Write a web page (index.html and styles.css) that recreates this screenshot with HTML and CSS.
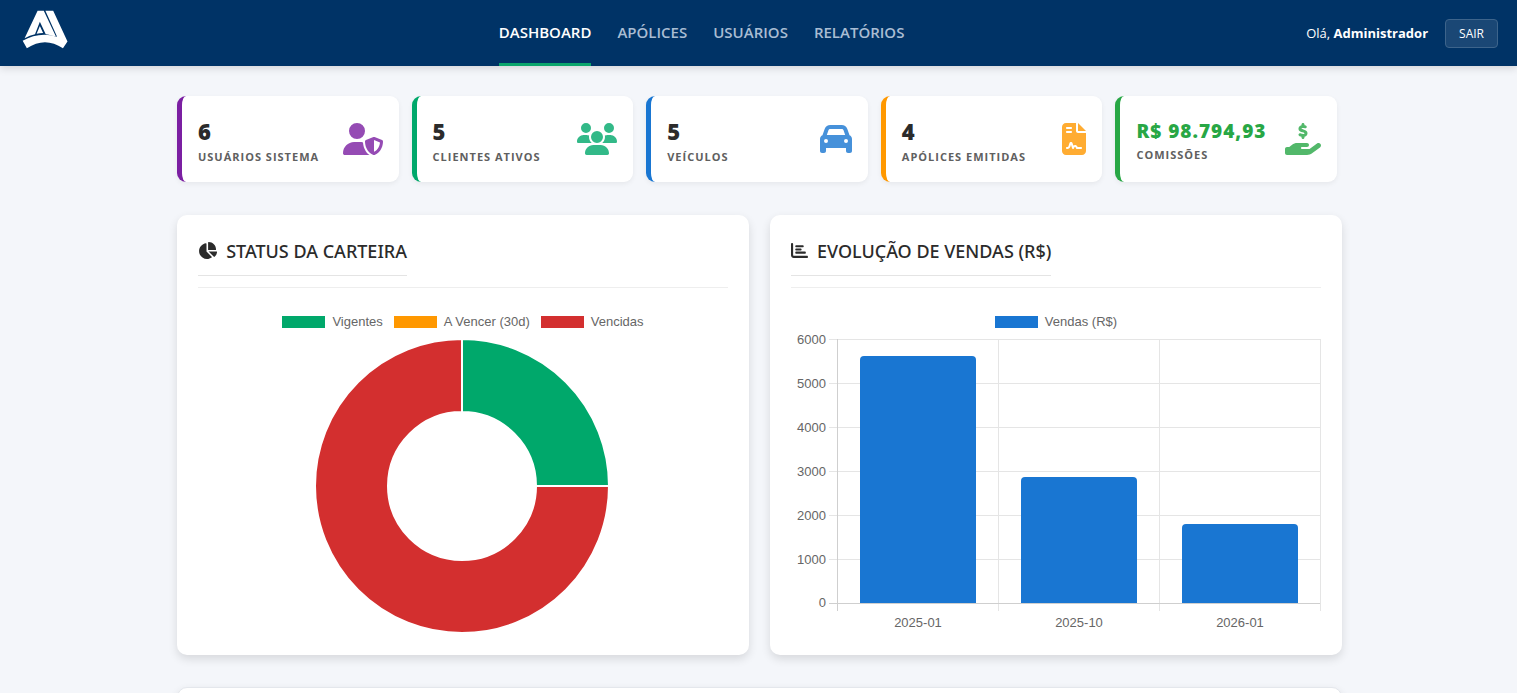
FILE: index.html
```html
<!DOCTYPE html>
<html lang="pt-BR">

<head>
    <meta charset="UTF-8">
    <meta name="viewport" content="width=device-width, initial-scale=1.0">
    <title>Dashboard</title>
    <link rel="stylesheet" href="styles.css">
</head>

<body>
    <div class="page">
        <header class="navbar">
            <a href="#" class="logo" aria-label="Início">
                <svg viewBox="64 28 142 120">
                    <path d="M112 30H131L168 109L156 107Q147 104 137 103L119 64L104 103Q88 106 72 115Z" />
                    <path d="M119 77L129 99Q119 99 109 101Z" />
                    <path d="M136 30H160L204 125L190 146Q135 109 79 146L66 123Q115 94 172 110Z" />
                </svg>
            </a>
            <nav class="menu">
                <a href="#" class="active">DASHBOARD</a>
                <a href="#">APÓLICES</a>
                <a href="#">USUÁRIOS</a>
                <a href="#">RELATÓRIOS</a>
            </nav>
            <div class="user-area">
                <span>Olá, <strong>Administrador</strong></span>
                <button type="button" class="btn-sair">SAIR</button>
            </div>
        </header>

        <main class="container">
            <!-- Cards de resumo -->
            <section class="stats">
                <div class="stat-card roxo">
                    <div class="info">
                        <h3>6</h3>
                        <p>USUÁRIOS SISTEMA</p>
                    </div>
                    <svg class="icon" viewBox="0 0 640 512"><path d="M224 256A128 128 0 1 0 224 0a128 128 0 1 0 0 256zm-45.7 48C79.8 304 0 383.8 0 482.3C0 498.7 13.3 512 29.7 512H418.3c1.8 0 3.5-.2 5.3-.5c-76.3-55.1-99.8-141-103.1-200.2c-16.1-4.8-33.1-7.3-50.7-7.3H178.3zm308.8-78.3l-120 48C358 277.4 352 286.2 352 296c0 63.3 25.9 168.8 134.8 214.2c5.9 2.5 12.6 2.5 18.5 0C614.1 464.8 640 359.3 640 296c0-9.8-6-18.6-15.1-22.3l-120-48c-5.7-2.3-12.1-2.3-17.8 0zM591.4 312c-3.9 50.7-27.2 116.7-95.4 149.7V273.8L591.4 312z" /></svg>
                </div>
                <div class="stat-card verde">
                    <div class="info">
                        <h3>5</h3>
                        <p>CLIENTES ATIVOS</p>
                    </div>
                    <svg class="icon" viewBox="0 0 640 512"><path d="M144 0a80 80 0 1 1 0 160A80 80 0 1 1 144 0zM512 0a80 80 0 1 1 0 160A80 80 0 1 1 512 0zM0 298.7C0 239.8 47.8 192 106.7 192h42.7c15.9 0 31 3.5 44.6 9.7c-1.3 7.2-1.9 14.7-1.9 22.3c0 38.2 16.8 72.5 43.3 96c-.2 0-.4 0-.7 0H21.3C9.6 320 0 310.4 0 298.7zM405.3 320c-.2 0-.4 0-.7 0c26.6-23.5 43.3-57.8 43.3-96c0-7.6-.7-15-1.9-22.3c13.6-6.3 28.7-9.7 44.6-9.7h42.7C592.2 192 640 239.8 640 298.7c0 11.8-9.6 21.3-21.3 21.3H405.3zM224 224a96 96 0 1 1 192 0 96 96 0 1 1 -192 0zM128 485.3C128 411.7 187.7 352 261.3 352H378.7C452.3 352 512 411.7 512 485.3c0 14.7-11.9 26.7-26.7 26.7H154.7c-14.7 0-26.7-11.9-26.7-26.7z" /></svg>
                </div>
                <div class="stat-card azul">
                    <div class="info">
                        <h3>5</h3>
                        <p>VEÍCULOS</p>
                    </div>
                    <svg class="icon" viewBox="0 0 512 512"><path d="M135.2 117.4L109.1 192H402.9l-26.1-74.6C372.3 104.6 360.2 96 346.6 96H165.4c-13.6 0-25.7 8.6-30.2 21.4zM39.6 196.8L74.8 96.3C88.3 57.8 124.6 32 165.4 32H346.6c40.8 0 77.1 25.8 90.6 64.3l35.2 100.5c23.2 9.6 39.6 32.5 39.6 59.2V400v48c0 17.7-14.3 32-32 32H448c-17.7 0-32-14.3-32-32V400H96v48c0 17.7-14.3 32-32 32H32c-17.7 0-32-14.3-32-32V400 256c0-26.7 16.4-49.6 39.6-59.2zM128 288a32 32 0 1 0 -64 0 32 32 0 1 0 64 0zm288 32a32 32 0 1 0 0-64 32 32 0 1 0 0 64z" /></svg>
                </div>
                <div class="stat-card laranja">
                    <div class="info">
                        <h3>4</h3>
                        <p>APÓLICES EMITIDAS</p>
                    </div>
                    <svg class="icon" viewBox="0 0 384 512"><path d="M64 0C28.7 0 0 28.7 0 64V448c0 35.3 28.7 64 64 64H320c35.3 0 64-28.7 64-64V160H256c-17.7 0-32-14.3-32-32V0H64zM256 0V128H384L256 0zM80 64h64c8.8 0 16 7.2 16 16s-7.2 16-16 16H80c-8.8 0-16-7.2-16-16s7.2-16 16-16zm0 64h64c8.8 0 16 7.2 16 16s-7.2 16-16 16H80c-8.8 0-16-7.2-16-16s7.2-16 16-16zm54.2 253.8c-6.1 20.3-24.8 34.2-46 34.2H80c-8.8 0-16-7.2-16-16s7.2-16 16-16h8.2c7.1 0 13.3-4.6 15.3-11.4l14.9-49.5c3.4-11.3 13.8-19.1 25.6-19.1s22.2 7.7 25.6 19.1l11.6 38.6c7.4-6.2 16.8-9.7 26.8-9.7c15.9 0 30.4 9 37.5 23.2l4.4 8.8H304c8.8 0 16 7.2 16 16s-7.2 16-16 16H240c-6.1 0-11.6-3.4-14.3-8.8l-8.8-17.7c-1.7-3.4-5.1-5.5-8.8-5.5s-7.2 2.1-8.8 5.5l-8.8 17.7c-2.9 5.9-9.2 9.4-15.7 8.8s-12.1-5.1-13.9-11.3L144 349l-9.8 32.8z" /></svg>
                </div>
                <div class="stat-card dinheiro">
                    <div class="info">
                        <h3 class="valor">R$ 98.794,93</h3>
                        <p>COMISSÕES</p>
                    </div>
                    <svg class="icon" viewBox="0 0 576 512"><path d="M312 24V34.5c6.4 1.2 12.6 2.7 18.2 4.2c12.8 3.4 20.4 16.6 17 29.4s-16.6 20.4-29.4 17c-10.9-2.9-21.1-4.9-30.2-5c-7.3-.1-14.7 1.7-19.4 4.4c-2.1 1.3-3.1 2.4-3.5 3c-.3 .5-.7 1.2-.7 2.8c0 .3 0 .5 0 .6c.2 .2 .9 1.2 3.3 2.6c5.8 3.5 14.4 6.2 27.4 10.1l.9 .3c11.1 3.3 25.9 7.8 37.9 15.3c13.7 8.6 26.1 22.9 26.4 44.9c.3 22.5-11.4 38.9-26.7 48.5c-6.7 4.1-13.9 7-21.3 8.8V232c0 13.3-10.7 24-24 24s-24-10.7-24-24V220.6c-9.5-2.3-18.2-5.3-25.6-7.8c-2.1-.7-4.1-1.4-6-2c-12.6-4.2-19.4-17.8-15.2-30.4s17.8-19.4 30.4-15.2c2.6 .9 5 1.7 7.3 2.5c13.6 4.6 23.4 7.9 33.9 8.3c8 .3 15.1-1.6 19.2-4.1c1.9-1.2 2.8-2.2 3.2-2.9c.4-.6 .9-1.8 .8-4.1l0-.2c0-1 0-2.1-4-4.6c-5.7-3.6-14.3-6.4-27.1-10.3l-1.9-.6c-10.8-3.2-25-7.5-36.4-14.4c-13.5-8.1-26.5-22-26.6-44.1c-.1-22.9 12.9-38.6 27.7-47.4c6.4-3.8 13.3-6.4 20.2-8.2V24c0-13.3 10.7-24 24-24s24 10.7 24 24zM568.2 336.3c13.1 17.8 9.3 42.8-8.5 55.9L433.1 485.5c-23.4 17.2-51.6 26.5-80.7 26.5H192 32c-17.7 0-32-14.3-32-32V416c0-17.7 14.3-32 32-32H68.8l44.9-36c22.7-18.2 50.9-28 80-28H272h16 64c17.7 0 32 14.3 32 32s-14.3 32-32 32H288 272c-8.8 0-16 7.2-16 16s7.2 16 16 16H392.6l119.7-88.2c17.8-13.1 42.8-9.3 55.9 8.5z" /></svg>
                </div>
            </section>

            <!-- Gráficos -->
            <section class="charts">
                <div class="card">
                    <div class="card-header">
                        <h2>
                            <svg class="title-icon" viewBox="0 0 576 512"><path d="M304 240V16.6c0-9 7-16.6 16-16.6C443.7 0 544 100.3 544 224c0 9-7.6 16-16.6 16H304zM32 272C32 150.7 122.1 50.3 239 34.3c9.2-1.3 17 6.1 17 15.4V288L412.5 444.5c6.7 6.7 6.2 17.7-1.5 23.1C371.8 495.6 323.8 512 272 512C139.5 512 32 404.6 32 272zm526.4 16c9.3 0 16.6 7.8 15.4 17c-7.7 55.9-34.6 105.6-73.9 142.3c-6 5.6-15.4 5.2-21.2-.7L320 288H558.4z" /></svg>
                            STATUS DA CARTEIRA
                        </h2>
                    </div>
                    <ul class="legend">
                        <li><span class="box verde"></span>Vigentes</li>
                        <li><span class="box laranja"></span>A Vencer (30d)</li>
                        <li><span class="box vermelho"></span>Vencidas</li>
                    </ul>
                    <svg class="chart" viewBox="0 0 530 295">
                        <path class="fatia verde" d="M264 0A147 147 0 0 1 411 147H338A74 74 0 0 0 264 73Z" />
                        <path class="fatia vermelho" d="M411 147A147 147 0 1 1 264 0V73A74 74 0 1 0 338 147Z" />
                    </svg>
                </div>

                <div class="card">
                    <div class="card-header">
                        <h2>
                            <svg class="title-icon" viewBox="0 0 512 512"><path d="M32 32c17.7 0 32 14.3 32 32V400c0 8.8 7.2 16 16 16H480c17.7 0 32 14.3 32 32s-14.3 32-32 32H80c-44.2 0-80-35.8-80-80V64C0 46.3 14.3 32 32 32zm96 96c0-17.7 14.3-32 32-32l192 0c17.7 0 32 14.3 32 32s-14.3 32-32 32l-192 0c-17.7 0-32-14.3-32-32zm32 64H288c17.7 0 32 14.3 32 32s-14.3 32-32 32H160c-17.7 0-32-14.3-32-32s14.3-32 32-32zm0 96H416c17.7 0 32 14.3 32 32s-14.3 32-32 32H160c-17.7 0-32-14.3-32-32s14.3-32 32-32z" /></svg>
                            EVOLUÇÃO DE VENDAS (R$)
                        </h2>
                    </div>
                    <ul class="legend">
                        <li><span class="box azul"></span>Vendas (R$)</li>
                    </ul>
                    <svg class="chart" viewBox="0 0 530 295">
                        <path class="grid" d="M38 .5H529M38 44.5H529M38 88.5H529M38 132.5H529M38 176.5H529M38 220.5H529M207.500 0V272M368.500 0V272M529.500 0V272" />
                        <path class="eixo" d="M38 264.500H529M46.500 0V272" />
                        <g class="barras">
                            <path d="M69 264V21q0-4 4-4H181q4 0 4 4V264Z" />
                            <path d="M230 264V142q0-4 4-4H342q4 0 4 4V264Z" />
                            <path d="M391 264V189q0-4 4-4H503q4 0 4 4V264Z" />
                        </g>
                        <g class="valores">
                            <text x="35" y="5">6000</text>
                            <text x="35" y="49">5000</text>
                            <text x="35" y="93">4000</text>
                            <text x="35" y="137">3000</text>
                            <text x="35" y="181">2000</text>
                            <text x="35" y="225">1000</text>
                            <text x="35" y="268">0</text>
                        </g>
                        <g class="meses">
                            <text x="127" y="288">2025-01</text>
                            <text x="288" y="288">2025-10</text>
                            <text x="449" y="288">2026-01</text>
                        </g>
                    </svg>
                </div>
            </section>

            <section class="card proximo"></section>
        </main>
    </div>
</body>

</html>
```
FILE: styles.css
```css
* {
    box-sizing: border-box;
    margin: 0;
    padding: 0;
}

body {
    font-family: "Open Sans", "Noto Sans", sans-serif;
    background-color: #fff;
    color: #2b2b2b;
    height: 100vh;
    padding: 0 10px 5px 0;
    overflow: hidden;
}

.page {
    background-color: #f4f6fa;
    height: 100%;
    overflow: hidden;
}

.navbar {
    display: flex;
    justify-content: space-between;
    height: 66px;
    padding: 0 19px 0 22px;
    background-color: #003366;
    box-shadow: 0 2px 8px rgba(0, 0, 0, 0.15);
}

.logo {
    width: 75px;
    padding-top: 10px;
}

.logo svg {
    display: block;
    height: 39px;
    fill: #fff;
}

.menu {
    display: flex;
    gap: 26px;
}

.menu a {
    display: flex;
    align-items: center;
    border-bottom: 3px solid transparent;
    color: #a9bdd3;
    font-size: 15px;
    font-weight: 600;
    text-decoration: none;
}

.menu a:hover,
.menu a.active {
    color: #fff;
}

.menu a.active {
    border-bottom-color: #0aa56c;
}

.user-area {
    display: flex;
    align-items: center;
    gap: 17px;
    color: #fff;
    font-size: 13px;
}

.btn-sair {
    height: 29px;
    padding: 0 13px;
    border: 1px solid #3d648b;
    border-radius: 4px;
    background-color: #1a4775;
    color: #fff;
    font-family: inherit;
    font-size: 12px;
    cursor: pointer;
}

.container {
    max-width: 1167px;
    margin: 0 auto;
    padding: 30px 0 0 2px;
}

.stats {
    display: grid;
    grid-template-columns: repeat(5, 1fr);
    gap: 13px;
    margin-right: 5px;
    margin-bottom: 33px;
}

.stat-card {
    display: flex;
    align-items: center;
    justify-content: space-between;
    height: 86px;
    padding: 0 16px;
    border-left: 5px solid;
    border-radius: 9px;
    background-color: #fff;
    box-shadow: 0 2px 5px rgba(0, 0, 0, 0.06);
}

.stat-card .info {
    padding-top: 3px;
}

.stat-card h3 {
    color: #2b2b2b;
    font-size: 22px;
    font-weight: 800;
    line-height: 32px;
}

.stat-card h3.valor {
    color: #28a745;
    font-size: 19px;
    line-height: 28px;
    letter-spacing: 1px;
}

.stat-card p {
    color: #606060;
    font-size: 11px;
    font-weight: 700;
    line-height: 20px;
    letter-spacing: 1px;
}

.icon {
    height: 32px;
    fill: currentColor;
    opacity: 0.8;
}

.stat-card.roxo {
    color: #7b1fa2;
}

.stat-card.verde {
    color: #00a86b;
}

.stat-card.azul {
    color: #1976d2;
}

.stat-card.laranja {
    color: #ff9800;
}

.stat-card.dinheiro {
    color: #28a745;
}

.charts {
    display: grid;
    grid-template-columns: 1fr 1fr;
    gap: 21px;
    margin-bottom: 32px;
}

.card {
    padding: 21px;
    border-radius: 10px;
    background-color: #fff;
    box-shadow: 0 4px 10px rgba(0, 0, 0, 0.12);
}

.card-header {
    margin-bottom: 24px;
    padding-bottom: 11px;
    border-bottom: 1px solid #eee;
}

.card-header h2 {
    display: flex;
    align-items: center;
    gap: 9px;
    width: fit-content;
    height: 40px;
    padding-bottom: 10px;
    border-bottom: 1px solid #e4e4e4;
    font-family: "Noto Sans", "Open Sans", sans-serif;
    font-size: 18px;
    font-weight: 500;
}

.title-icon {
    height: 17px;
    fill: #2b2b2b;
}

.legend {
    display: flex;
    justify-content: center;
    gap: 11px;
    margin-bottom: 7px;
    list-style: none;
    color: #666;
    font-family: "Liberation Sans", Arial, sans-serif;
    font-size: 13px;
    line-height: 20px;
}

.legend li {
    display: flex;
    align-items: center;
    gap: 7px;
}

.box {
    width: 43px;
    height: 12px;
}

.box.verde {
    background-color: #00a86b;
}

.box.laranja {
    background-color: #ff9800;
}

.box.vermelho {
    background-color: #d32f2f;
}

.box.azul {
    background-color: #1976d2;
}

.chart {
    display: block;
    width: 100%;
    overflow: visible;
}

.fatia {
    stroke: #fff;
    stroke-width: 2;
}

.fatia.verde {
    fill: #00a86b;
}

.fatia.vermelho {
    fill: #d32f2f;
}

.grid {
    stroke: #e5e5e5;
}

.eixo {
    stroke: #cfcfcf;
}

.barras {
    fill: #1976d2;
}

.chart text {
    fill: #666;
    font-family: "Liberation Sans", Arial, sans-serif;
    font-size: 13px;
}

.valores {
    text-anchor: end;
}

.meses {
    text-anchor: middle;
}

.proximo {
    height: 200px;
    border: 1px solid #e4e7ec;
}
```
